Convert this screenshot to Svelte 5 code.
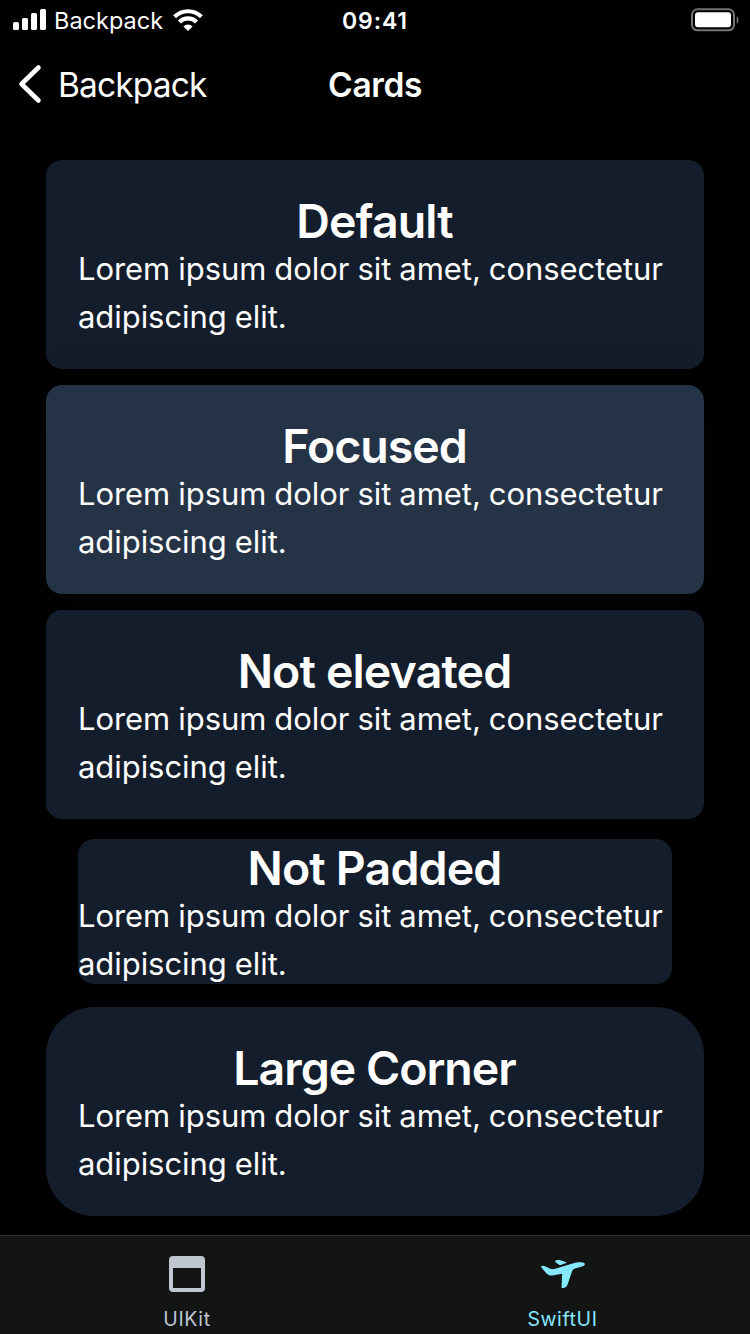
<script>
  const cards = [
    { title: 'Default', kind: 'default', spacing: -0.9 },
    { title: 'Focused', kind: 'focused', spacing: -1.05 },
    { title: 'Not elevated', kind: 'flat', spacing: -0.87 },
    { title: 'Not Padded', kind: 'unpadded', spacing: -0.85 },
    { title: 'Large Corner', kind: 'large', spacing: -1.02 }
  ];
</script>

<div class="screen">
  <header class="status">
    <div class="carrier">
      <svg class="signal" width="34" height="22" viewBox="0 0 34 22" fill="#fff">
        <rect x="0" y="13" width="6" height="8" rx="1.6" />
        <rect x="9" y="9" width="6" height="12" rx="1.6" />
        <rect x="18" y="4" width="6" height="17" rx="1.6" />
        <rect x="27" y="0" width="6" height="21" rx="1.6" />
      </svg>
      <span class="name">Backpack</span>
      <svg class="wifi" width="30" height="22" viewBox="0 0 30 22" fill="none" stroke="#fff" stroke-width="4.200">
        <path d="M1.600 7.800a19 19 0 0 1 26.800 0" />
        <path d="M6.400 12.900a12.200 12.200 0 0 1 17.200 0" />
        <path d="M15 22l-4.600-4.600a6.500 6.500 0 0 1 9.200 0z" fill="#fff" stroke="none" />
      </svg>
    </div>
    <time>09:41</time>
    <svg class="battery" width="49" height="24" viewBox="0 0 49 24">
      <rect x="2" y="1.300" width="42" height="21" rx="5.500" fill="none" stroke="#727272" stroke-width="2" />
      <rect x="5" y="4.300" width="36" height="15" rx="3" fill="#fff" />
      <path d="M46.700 8.300c2.400 1 2.400 6.500 0 7.500z" fill="#727272" />
    </svg>
  </header>

  <nav class="navbar">
    <div class="back">
      <svg width="24" height="40" viewBox="0 0 24 40" fill="none" stroke="#fff" stroke-width="4.600" stroke-linecap="round" stroke-linejoin="round">
        <path d="M20.500 3.500L3.500 20l17 16.500" />
      </svg>
      <span>Backpack</span>
    </div>
    <h1>Cards</h1>
  </nav>

  <main>
    {#each cards as card}
      <section class="card {card.kind}">
        <h2 style="letter-spacing: {card.spacing}px">{card.title}</h2>
        <p>Lorem ipsum dolor sit amet, consectetur adipiscing elit.</p>
      </section>
    {/each}
  </main>

  <footer>
    <div class="tab">
      <svg width="48" height="48" viewBox="0 0 48 48">
        <path fill="#bfc6d0" fill-rule="evenodd" d="M10 6h28a4 4 0 0 1 4 4v28a4 4 0 0 1-4 4H10a4 4 0 0 1-4-4V10a4 4 0 0 1 4-4zM10 18v20h28V18z" />
      </svg>
      <span>UIKit</span>
    </div>
    <div class="tab active">
      <svg width="48" height="48" viewBox="0 0 48 48" fill="#84e9ff">
        <path d="M2.200 16.300c.6-.8 2.300-.7 3.800 0l5.400 2.400c1.600.7 3 .5 4.800 0l17.300-5.200c4-1.200 8.300-1.500 10.900-.8 2 .6 1.900 2.400-.2 3.300-2.300 1-5.600 1.700-8.200 2.500-1.700.5-2.400 1.200-2.900 2.800l-4.600 13.500c-.7 2-1.900 2.900-3.900 3.100l-2 .1.500-14.300-8.400 1.600c-3.200.6-5.200.1-7.400-2.100l-4.500-5.200c-.5-.6-.8-1.100-.6-1.700z" />
        <path d="M16.300 12c-.5-.8.2-1.400 1.200-1.700 1.300-.4 2.600-.4 3.900 0l5.300 1.700c1 .3 1 .9 0 1.200l-4.300 1.500c-1 .4-1.800.3-2.700-.3z" />
      </svg>
      <span>SwiftUI</span>
    </div>
  </footer>
</div>

<style>
  :global(body) { background: #000; }
  .screen {
    width: 750px;
    height: 1334px;
    display: flex;
    flex-direction: column;
    background: #000;
    color: #fff;
    font-family: Inter, sans-serif;
    overflow: hidden;
  }
  .status {
    height: 40px;
    display: grid;
    grid-template-columns: 1fr auto 1fr;
    align-items: center;
    padding: 0 11px 0 13px;
    box-sizing: border-box;
  }
  .carrier { display: flex; align-items: center; }
  .name { font-size: 23.500px; margin: 0 10px 0 7px; }
  time { font-size: 23px; font-weight: 560; letter-spacing: 0.900px; padding: 2px 2px 0 0; }
  .battery { justify-self: end; }
  .navbar {
    height: 88px;
    display: grid;
    grid-template-columns: 1fr auto 1fr;
    align-items: center;
    padding: 0 18px;
  }
  .back { display: flex; align-items: center; font-size: 33.500px; gap: 16px; letter-spacing: -0.850px; }
  .back span { padding-top: 2px; }
  h1 { margin: 0; padding-top: 2px; font-size: 33.500px; font-weight: 600; letter-spacing: -0.400px; }
  main {
    flex: 1;
    display: flex;
    flex-direction: column;
    padding: 32px 46px 0;
    gap: 16px;
  }
  .card {
    padding: 32px;
    border-radius: 16px;
    background: #141d2b;
  }
  .focused {
    background: #253346;
    box-shadow: 0 8px 56px rgba(37, 32, 31, 0.16);
  }
  .unpadded { padding: 0; margin: 4px 32px 7px; }
  .large { border-radius: 48px; }
  h2 {
    margin: 0;
    padding: 1px 1px 0 0;
    font-size: 46.500px;
    line-height: 57px;
    font-weight: 600;
    text-align: center;
  }
  p {
    margin: -5px 0 -4px;
    font-size: 31px;
    line-height: 48px;
    letter-spacing: -0.060px;
    word-spacing: -0.600px;
  }
  footer {
    height: 99px;
    box-sizing: border-box;
    border-top: 1px solid #2b2c2c;
    background: #131414;
    display: grid;
    grid-template-columns: 1fr 1fr;
  }
  .tab {
    display: flex;
    flex-direction: column;
    align-items: center;
    padding: 14px 1px 0 0;
    color: #bfc6d0;
    font-size: 19.500px;
    line-height: 24px;
    gap: 9px;
    letter-spacing: 0.600px;
  }
  .tab.active { color: #84e9ff; padding-right: 0; }
</style>
